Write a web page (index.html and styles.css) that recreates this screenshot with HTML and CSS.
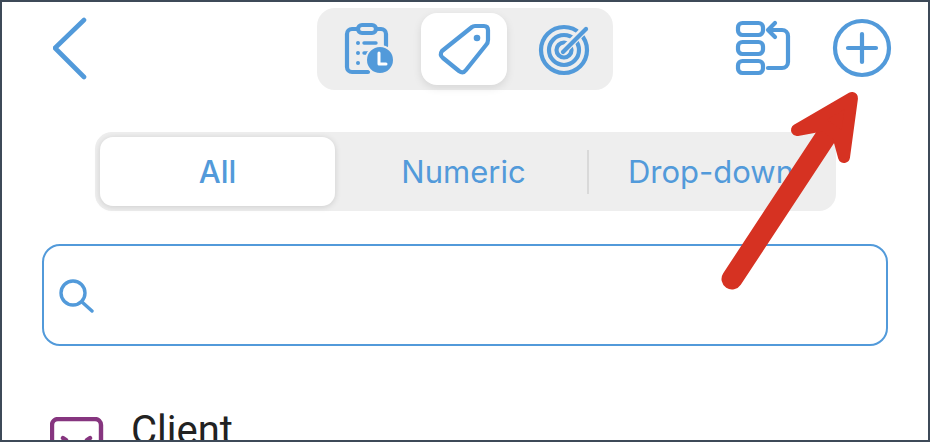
FILE: index.html
```html
<!DOCTYPE html>
<html lang="en">
<head>
<meta charset="utf-8">
<title>Tags</title>
<link rel="stylesheet" href="styles.css">
</head>
<body>
<div class="frame">
  <header class="topbar">
    <div class="topbar-left">
      <svg class="icon back" viewBox="53 16 34 64"><path d="M84 20 55 48 84 77"/></svg>
    </div>
    <nav class="switcher">
      <div class="switch-btn">
        <svg class="icon" viewBox="322 13 86 72">
          <path d="M357 29h-6a5 5 0 0 0-5 5v33a5 5 0 0 0 5 5h16M375 29h5a5 5 0 0 1 5 5v12"/>
          <rect x="357" y="25" width="18" height="8" rx="4"/>
          <path class="thin" d="M363 43h12M363 53h7"/>
          <circle class="dot" cx="357" cy="43" r="2"/><circle class="dot" cx="357" cy="53" r="2"/><circle class="dot" cx="357" cy="63" r="2"/>
          <circle class="solid" cx="379" cy="60" r="14"/>
          <path class="hand" d="M378 53v11h7"/>
        </svg>
      </div>
      <div class="switch-btn is-active">
        <svg class="icon" viewBox="421 13 86 72">
          <path d="M472 27Q473 26 475 26H484Q488 26 488 30V40Q488 43 486 45L466 70Q463 74 459 71L443 58Q439 55 442 51Z"/>
          <circle class="dot" cx="477" cy="38" r="3.3"/>
        </svg>
      </div>
      <div class="switch-btn">
        <svg class="icon" viewBox="519 13 86 72">
          <circle cx="564" cy="50" r="23"/><circle cx="564" cy="50" r="15"/><circle cx="564" cy="50" r="7.5"/>
          <path class="gap" d="M564 50 590 24"/>
          <path d="M563 52 586 29"/>
        </svg>
      </div>
    </nav>
    <div class="topbar-right">
      <svg class="icon action-sort" viewBox="735 20 56 56">
        <rect x="738" y="23" width="25" height="12" rx="4.5"/><rect x="738" y="42" width="25" height="12" rx="4.5"/><rect x="738" y="61" width="25" height="12" rx="4.5"/>
        <path d="M768 68h14a6 6 0 0 0 6-6V36a6 6 0 0 0-6-6h-14M775 23l-7 7 7 7"/>
      </svg>
      <svg class="icon action-add" viewBox="832 18 60 60">
        <circle cx="862" cy="48" r="27"/><path d="M848 48h28M862 34v28"/>
      </svg>
    </div>
  </header>

  <div class="segments">
    <div class="segment is-active">All</div>
    <div class="segment segment-numeric">Numeric</div>
    <div class="segment-divider"></div>
    <div class="segment segment-dropdown">Drop-down</div>
  </div>

  <div class="search">
    <svg class="icon search-icon" viewBox="58 275 36 36"><circle cx="73" cy="291" r="12"/><path d="M82 300l10 9"/></svg>
  </div>

  <div class="row">
    <svg class="row-icon" viewBox="50 417 54 40"><rect x="52" y="419" width="49" height="40" rx="6"/><path d="M63 438l3 2M90 438l-3 2"/></svg>
    <span class="row-label">Client</span>
  </div>

  <svg class="callout" viewBox="710 85 160 210">
    <path class="callout-shaft" d="M732 279 838 118"/>
    <path class="callout-head" d="M852 98 797 130 824 125 838 135 844 157Z"/>
  </svg>
</div>
</body>
</html>
```
FILE: styles.css
```css
* { box-sizing: border-box; }
html, body { margin: 0; height: 100%; background: #fff; overflow: hidden; }
.frame {
  position: relative;
  width: 930px;
  height: 442px;
  border: 2px solid #3d4a58;
  background: #fff;
  overflow: hidden;
  font-family: Inter, "Liberation Sans", sans-serif;
}
.icon { display: block; fill: none; stroke: #529ada; stroke-width: 4.2; stroke-linecap: round; stroke-linejoin: round; }
.icon .thin { stroke-width: 3.4; }
.icon .dot { fill: #529ada; stroke: none; }
.icon .solid { fill: #529ada; stroke: #eeeeee; stroke-width: 2; }
.icon .hand { stroke: #fff; stroke-width: 3; fill: none; }
.icon .gap { stroke: #eeeeee; stroke-width: 8; stroke-linecap: butt; }

.topbar {
  display: grid;
  grid-template-columns: 1fr auto 1fr;
  align-items: start;
  padding: 6px 38px 0;
}
.topbar-left { padding: 8px 0 0 13px; }
.back { width: 34px; height: 64px; stroke-width: 4.6; }
.switcher {
  display: flex;
  gap: 12px;
  padding: 5px 8px 5px 6px;
  background: #eeeeee;
  border-radius: 18px;
}
.switch-btn { width: 86px; height: 72px; border-radius: 16px; }
.switch-btn .icon { width: 86px; height: 72px; }
.switch-btn.is-active { background: #fff; box-shadow: 0 3px 8px rgba(0, 0, 0, 0.1); }

.topbar-right {
  display: flex;
  justify-content: flex-end;
  align-items: flex-start;
  gap: 41px;
  padding-top: 10px;
}
.action-sort { width: 56px; height: 56px; margin-top: 2px; }
.action-add { width: 60px; height: 60px; stroke-width: 4.2; margin-right: -2px; }

.segments {
  display: flex;
  align-items: center;
  height: 79px;
  margin: 42px 92px 0 93px;
  padding: 5px;
  background: #eeeeee;
  border-radius: 17px;
}
.segment {
  flex: 1;
  height: 69px;
  display: flex;
  align-items: center;
  justify-content: center;
  font-size: 31px;
  color: #529ada;
  white-space: nowrap;
}
.segment.is-active {
  flex: 0 0 235px;
  background: #fff;
  border-radius: 13px;
  font-weight: 500;
  box-shadow: 0 1px 6px rgba(0, 0, 0, 0.14);
}
.segment-numeric { flex: 0 0 252px; padding-left: 5px; }
.segment-dropdown { padding-left: 2px; }
.segment-divider { width: 2px; height: 44px; background: #d9d9d9; }

.search {
  display: flex;
  align-items: center;
  height: 102px;
  margin: 33px 40px 0;
  padding-left: 14px;
  border: 2.5px solid #529ada;
  border-radius: 18px;
}
.search-icon { width: 36px; height: 36px; stroke-width: 3.4; }

.row {
  display: flex;
  align-items: flex-start;
  gap: 27px;
  margin: 62px 0 0 48px;
}
.row-icon { width: 54px; height: 40px; margin-top: 9px; flex: none; fill: none; stroke: #86357f; stroke-width: 4.4; stroke-linecap: round; }
.row-label { font-family: Roboto, sans-serif; font-size: 40px; line-height: 46px; color: #222; }

.callout { position: absolute; left: 708px; top: 83px; width: 160px; height: 210px; }
.callout-shaft { fill: none; stroke: #d63222; stroke-width: 21; stroke-linecap: round; }
.callout-head { fill: #d63222; stroke: #d63222; stroke-width: 12; stroke-linejoin: round; }
```
